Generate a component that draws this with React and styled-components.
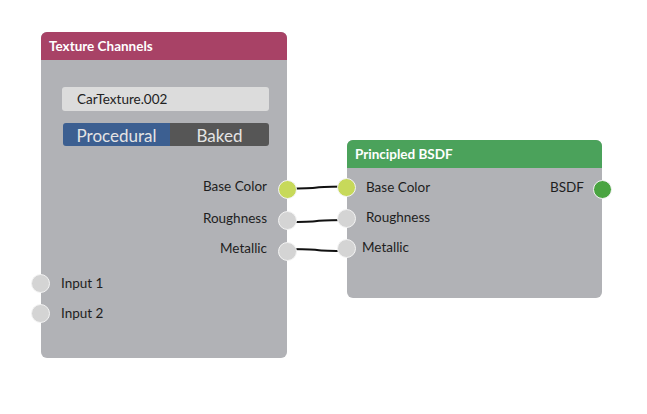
import React from "react";
import styled, { createGlobalStyle } from "styled-components";

const Global = createGlobalStyle`
  html, body { margin: 0; padding: 0; background: #ffffff; }
  body { font-family: Lato, "Noto Sans", sans-serif; }
`;

const Canvas = styled.div`
  position: relative;
  width: 647px;
  height: 414px;
  background: #ffffff;
  overflow: hidden;
`;

const Wires = styled.svg`
  position: absolute;
  left: 0;
  top: 0;
  width: 647px;
  height: 414px;
`;

const Node = styled.div`
  position: absolute;
  left: ${(p) => p.$x}px;
  top: ${(p) => p.$y}px;
  width: ${(p) => p.$w}px;
  height: ${(p) => p.$h}px;
  background: #b1b2b6;
  border-radius: 6px;
  display: flex;
  flex-direction: column;
`;

const Header = styled.div`
  height: 28px;
  flex: none;
  background: ${(p) => p.$color};
  border-radius: 6px 6px 0 0;
  color: #ffffff;
  font-weight: 700;
  font-size: 13.5px;
  display: flex;
  align-items: center;
  padding-left: 8px;
  padding-bottom: 1px;
  box-sizing: border-box;
`;

const Body = styled.div`
  display: flex;
  flex-direction: column;
  padding: ${(p) => p.$pad};
`;

const Field = styled.div`
  height: 24px;
  margin: 0 18px 0 21px;
  background: #dcdcdc;
  border-radius: 3px;
  font-size: 13.5px;
  color: #222;
  display: flex;
  align-items: center;
  padding-left: 15px;
`;

const Toggle = styled.div`
  margin: 12px 18px 0 22px;
  height: 23px;
  display: flex;
  border-radius: 3px;
  overflow: hidden;
`;

const ToggleOpt = styled.div`
  flex: ${(p) => p.$grow};
  background: ${(p) => (p.$active ? "#3c5f91" : "#565656")};
  color: #e4e4e4;
  font-size: 17px;
  display: flex;
  align-items: center;
  justify-content: center;
  padding-top: 1px;
`;

const Row = styled.div`
  position: relative;
  height: ${(p) => p.$h}px;
  display: flex;
  align-items: center;
  justify-content: ${(p) => p.$justify || "flex-start"};
  font-size: 13.5px;
  color: #1e1e1e;
`;

const Label = styled.span`
  margin: ${(p) => p.$m};
  margin-top: ${(p) => p.$dy || 0}px;
`;

const Socket = styled.span`
  position: absolute;
  top: 50%;
  ${(p) => (p.$side === "right" ? "right: -10px;" : "left: -10px;")}
  margin-top: ${(p) => -9 + (p.$dy || 0)}px;
  width: 19px;
  height: 19px;
  box-sizing: border-box;
  border-radius: 50%;
  background: ${(p) => p.$color || "#d4d4d4"};
  border: 1px solid #f4f4f4;
`;

const YELLOW = "#c7d95a";

export default function App() {
  return (
    <Canvas>
      <Global />
      <Wires viewBox="0 0 647 414">
        <g fill="none" stroke="#111" strokeWidth="2">
          <path d="M287 188.5 C 334 188.5, 300 186.5, 347 186.5" />
          <path d="M287 222 C 334 222, 300 220, 347 220" />
          <path d="M287 249 C 334 249, 300 251, 347 251" />
        </g>
      </Wires>

      <Node $x={41} $y={32} $w={246} $h={326}>
        <Header $color="#a84266">Texture Channels</Header>
        <Body $pad="27px 0 0 0">
          <Field>CarTexture.002</Field>
          <Toggle>
            <ToggleOpt $active $grow={107}>Procedural</ToggleOpt>
            <ToggleOpt $grow={99}>Baked</ToggleOpt>
          </Toggle>
          <div style={{ height: 26 }} />
          <Row $h={31} $justify="flex-end">
            <Label $m="0 20px 0 0" $dy={-3}>Base Color</Label>
            <Socket $side="right" $color={YELLOW} $dy={1} />
          </Row>
          <Row $h={31} $justify="flex-end">
            <Label $m="0 20px 0 0" $dy={-2}>Roughness</Label>
            <Socket $side="right" $dy={1} />
          </Row>
          <Row $h={31} $justify="flex-end">
            <Label $m="0 20px 0 0" $dy={-4}>Metallic</Label>
            <Socket $side="right" $dy={1} />
          </Row>
          <div style={{ height: 3 }} />
          <Row $h={30}>
            <Label $m="0 0 0 20px">Input 1</Label>
            <Socket />
          </Row>
          <Row $h={30}>
            <Label $m="0 0 0 20px">Input 2</Label>
            <Socket />
          </Row>
        </Body>
      </Node>

      <Node $x={347} $y={140} $w={255} $h={158}>
        <Header $color="#4ba25b">Principled BSDF</Header>
        <Body $pad="4px 0 0 0">
          <Row $h={30} $justify="space-between">
            <Label $m="0 0 0 19px">Base Color</Label>
            <Label $m="0 18px 0 0">BSDF</Label>
            <Socket $color={YELLOW} />
            <Socket $side="right" $color="#4aa441" $dy={2} />
          </Row>
          <Row $h={30}>
            <Label $m="0 0 0 19px">Roughness</Label>
            <Socket $dy={1} />
          </Row>
          <Row $h={30}>
            <Label $m="0 0 0 15px">Metallic</Label>
            <Socket $dy={1} />
          </Row>
        </Body>
      </Node>
    </Canvas>
  );
}
